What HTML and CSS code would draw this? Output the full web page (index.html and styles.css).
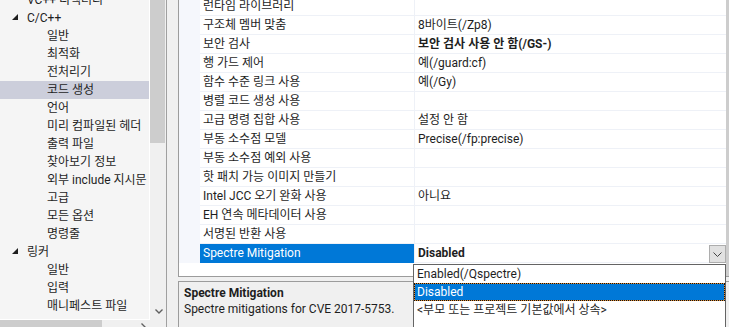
FILE: index.html
```html
<!DOCTYPE html>
<html lang="ko">
<head>
  <meta charset="UTF-8">
  <title>속성 페이지</title>
  <link rel="stylesheet" href="styles.css">
</head>
<body>
  <div class="dialog">
    <!-- 왼쪽 트리 -->
    <div class="nav">
      <div class="nav-body">
        <div class="tree">
          <ul class="tree-list">
            <li class="lvl1">VC++ 디렉터리</li>
            <li class="lvl1"><span class="twisty"><svg width="6" height="6" viewBox="0 0 6 6"><polygon points="6,0 6,6 0,6"/></svg></span>C/C++</li>
            <li class="lvl2">일반</li>
            <li class="lvl2">최적화</li>
            <li class="lvl2">전처리기</li>
            <li class="lvl2 selected">코드 생성</li>
            <li class="lvl2">언어</li>
            <li class="lvl2">미리 컴파일된 헤더</li>
            <li class="lvl2">출력 파일</li>
            <li class="lvl2">찾아보기 정보</li>
            <li class="lvl2">외부 include 지시문</li>
            <li class="lvl2">고급</li>
            <li class="lvl2">모든 옵션</li>
            <li class="lvl2">명령줄</li>
            <li class="lvl1"><span class="twisty"><svg width="6" height="6" viewBox="0 0 6 6"><polygon points="6,0 6,6 0,6"/></svg></span>링커</li>
            <li class="lvl2">일반</li>
            <li class="lvl2">입력</li>
            <li class="lvl2">매니페스트 파일</li>
          </ul>
        </div>
        <div class="vscroll">
          <div class="vthumb"></div>
          <svg class="vdown" width="8" height="5" viewBox="0 0 8 5"><polyline points="0.5,0.5 4,4 7.5,0.5"/></svg>
        </div>
      </div>
      <div class="hscroll">
        <div class="hthumb"></div>
        <svg class="hright" width="5" height="8" viewBox="0 0 5 8"><polyline points="0.5,0.5 4,4 0.5,7.5"/></svg>
      </div>
    </div>

    <div class="splitter"></div>

    <!-- 속성 그리드 -->
    <div class="main">
      <div class="grid">
        <div class="grid-rows">
          <div class="row"><div class="gutter"></div><div class="name">런타임 라이브러리</div><div class="value"></div></div>
          <div class="row"><div class="gutter"></div><div class="name">구조체 멤버 맞춤</div><div class="value">8바이트(/Zp8)</div></div>
          <div class="row"><div class="gutter"></div><div class="name">보안 검사</div><div class="value bold">보안 검사 사용 안 함(/GS-)</div></div>
          <div class="row"><div class="gutter"></div><div class="name">행 가드 제어</div><div class="value">예(/guard:cf)</div></div>
          <div class="row"><div class="gutter"></div><div class="name">함수 수준 링크 사용</div><div class="value">예(/Gy)</div></div>
          <div class="row"><div class="gutter"></div><div class="name">병렬 코드 생성 사용</div><div class="value"></div></div>
          <div class="row"><div class="gutter"></div><div class="name">고급 명령 집합 사용</div><div class="value">설정 안 함</div></div>
          <div class="row"><div class="gutter"></div><div class="name">부동 소수점 모델</div><div class="value">Precise(/fp:precise)</div></div>
          <div class="row"><div class="gutter"></div><div class="name">부동 소수점 예외 사용</div><div class="value"></div></div>
          <div class="row"><div class="gutter"></div><div class="name">핫 패치 가능 이미지 만들기</div><div class="value"></div></div>
          <div class="row"><div class="gutter"></div><div class="name">Intel JCC 오기 완화 사용</div><div class="value">아니요</div></div>
          <div class="row"><div class="gutter"></div><div class="name">EH 연속 메타데이터 사용</div><div class="value"></div></div>
          <div class="row"><div class="gutter"></div><div class="name">서명된 반환 사용</div><div class="value"></div></div>
          <div class="row active">
            <div class="gutter"></div>
            <div class="name">Spectre Mitigation</div>
            <div class="value bold">
              Disabled
              <span class="combo-btn"><svg width="9" height="5" viewBox="0 0 9 5"><polyline points="0.5,0.5 4.5,4.5 8.5,0.5"/></svg></span>
            </div>
          </div>
        </div>
        <div class="grid-vscroll"></div>
      </div>

      <div class="desc">
        <div class="desc-title">Spectre Mitigation</div>
        <div class="desc-text">Spectre mitigations for CVE 2017-5753.</div>
      </div>

      <ul class="dropdown">
        <li>Enabled(/Qspectre)</li>
        <li class="picked">Disabled</li>
        <li>&lt;부모 또는 프로젝트 기본값에서 상속&gt;</li>
      </ul>
    </div>
  </div>
</body>
</html>
```

FILE: styles.css
```css
body {
  margin: 0;
  font-family: Roboto, "Noto Sans CJK KR", sans-serif;
  font-size: 12px;
  color: #1e1e1e;
  background-color: #f0f0f0;
}
ul {
  margin: 0;
  padding: 0;
  list-style: none;
}
.dialog {
  display: flex;
  width: 729px;
  height: 327px;
  overflow: hidden;
  background-color: #f0f0f0;
}

/* 트리 */
.nav {
  width: 166px;
  display: flex;
  flex-direction: column;
  flex-shrink: 0;
}
.nav-body {
  display: flex;
  height: 320px;
}
.tree {
  width: 149px;
  height: 319px;
  border-right: 1px solid #fff;
  border-bottom: 1px solid #fff;
  background-color: #f5f5f5;
  overflow: hidden;
}
.tree-list {
  margin-top: -9px;
}
.tree-list li {
  height: 18px;
  line-height: 18px;
  white-space: nowrap;
  position: relative;
}
.lvl1 {
  padding-left: 27px;
}
.lvl2 {
  padding-left: 47px;
}
.tree-list .selected {
  background-color: #cccedb;
}
.twisty {
  position: absolute;
  left: 12px;
  top: 5px;
  line-height: 0;
}
.twisty svg {
  fill: #1e1e1e;
}
.vscroll {
  width: 16px;
  position: relative;
}
.vthumb {
  width: 15px;
  height: 143px;
  background-color: #cdcdcd;
}
.vdown {
  position: absolute;
  left: 5px;
  top: 309px;
}
.vdown polyline, .hright polyline {
  fill: none;
  stroke: #606060;
  stroke-width: 1.4;
}
.hscroll {
  height: 7px;
  position: relative;
}
.hthumb {
  width: 102px;
  height: 7px;
  background-color: #cdcdcd;
}
.hright {
  position: absolute;
  left: 141px;
  top: 3px;
}
.splitter {
  width: 11px;
  flex-shrink: 0;
  border-left: 1px solid #a0a0a0;
}

/* 속성 그리드 */
.main {
  flex: 1;
  display: flex;
  flex-direction: column;
  position: relative;
}
.grid {
  display: flex;
  height: 276px;
  border-left: 1px solid #9c9c9c;
  border-bottom: 1px solid #9c9c9c;
  background-color: #fff;
}
.grid-rows {
  flex: 1;
  overflow: hidden;
}
.grid-vscroll {
  width: 3px;
  background-color: #cdcdcd;
}
.row {
  display: flex;
  height: 19px;
  line-height: 18px;
  white-space: nowrap;
}
.row:first-child {
  margin-top: -3px;
}
.gutter {
  width: 21px;
  background-color: #f5f7fc;
}
.name {
  width: 211px;
  padding-left: 3px;
  border-bottom: 1px solid #eef1f7;
}
.value {
  flex: 1;
  display: flex;
  padding-left: 3px;
  border-left: 1px solid #eef1f7;
  border-bottom: 1px solid #eef1f7;
}
.bold {
  font-weight: bold;
}
.active .name {
  background-color: #0078d7;
  color: #fff;
  border-bottom-color: #0078d7;
}
.combo-btn {
  margin-left: auto;
  margin-top: 1px;
  width: 15px;
  height: 16px;
  border: 1px solid #adadad;
  background-color: #e1e1e1;
  display: flex;
  align-items: center;
  justify-content: center;
}
.combo-btn polyline {
  fill: none;
  stroke: #444;
  stroke-width: 1;
}

/* 설명 */
.desc {
  margin-top: 4px;
  flex: 1;
  border-left: 1px solid #9c9c9c;
  border-top: 1px solid #9c9c9c;
  padding: 3px 5px;
  line-height: 16px;
}
.desc-title {
  font-weight: bold;
}

/* 드롭다운 목록 */
.dropdown {
  position: absolute;
  left: 235px;
  top: 264px;
  width: 311px;
  height: 70px;
  border: 1px solid #646464;
  background-color: #fff;
}
.dropdown li {
  height: 18px;
  line-height: 18px;
  padding-left: 3px;
  white-space: nowrap;
}
.dropdown li.picked {
  box-sizing: border-box;
  padding-left: 2px;
  line-height: 16px;
  color: #fff;
  border: 1px dotted #111;
  background: linear-gradient(#0078d7, #0078d7) padding-box, linear-gradient(#e0903a, #e0903a) border-box;
}
```
